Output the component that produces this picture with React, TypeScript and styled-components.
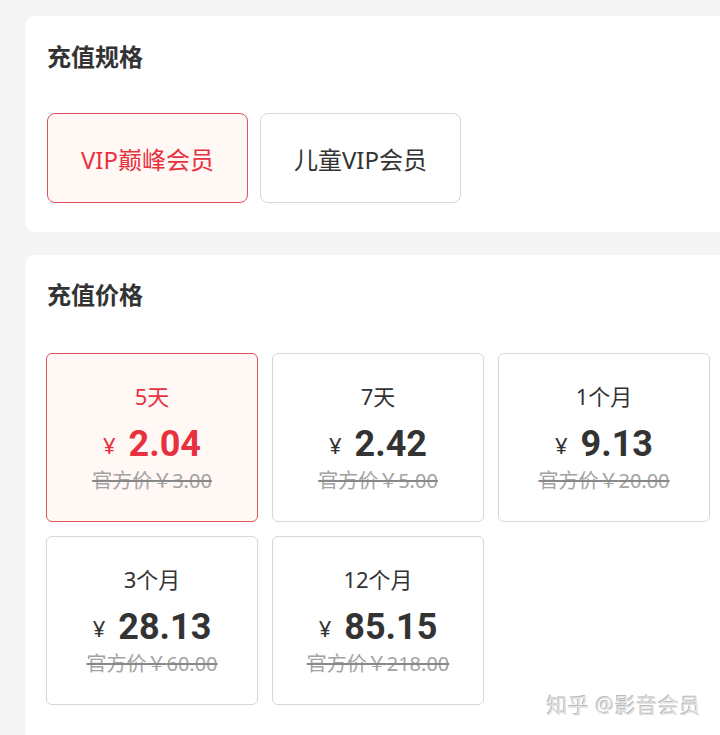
import React from "react";
import styled, { createGlobalStyle } from "styled-components";

const GlobalStyle = createGlobalStyle`
  body {
    margin: 0;
    background: #f4f4f4;
    font-family: "Noto Sans", "Noto Sans CJK SC", sans-serif;
  }
`;

const Page = styled.div`
  position: relative;
  width: 720px;
  height: 735px;
  overflow: hidden;
  padding-top: 16px;
  box-sizing: border-box;
`;

const Card = styled.section<{ $tall?: boolean }>`
  margin-left: 25px;
  width: 720px;
  background: #fff;
  border-radius: 10px;
  box-sizing: border-box;
  padding: 0 0 0 22px;
  min-height: ${p => (p.$tall ? "520px" : "auto")};
  & + & {
    margin-top: 23px;
  }
`;

const Title = styled.h2<{ $top: number; $bottom: number }>`
  margin: 0;
  padding: ${p => p.$top}px 0 ${p => p.$bottom}px 0;
  font-size: 24px;
  line-height: 32px;
  font-weight: 700;
  color: #333;
`;

const SpecRow = styled.div`
  display: flex;
  gap: 12px;
  padding-bottom: 29px;
`;

const SpecButton = styled.div<{ $active?: boolean }>`
  width: 201px;
  height: 90px;
  box-sizing: border-box;
  display: flex;
  align-items: center;
  justify-content: center;
  border-radius: 8px;
  border: 1.5px solid ${p => (p.$active ? "#e2525c" : "#d6d6d6")};
  background: ${p => (p.$active ? "#fff8f5" : "#fff")};
  color: ${p => (p.$active ? "#e8313f" : "#333")};
  font-size: 24px;
`;

const PriceGrid = styled.div`
  display: grid;
  grid-template-columns: repeat(3, 212px);
  gap: 14px;
  margin-left: -1px;
`;

const PriceCard = styled.div<{ $active?: boolean }>`
  height: 169px;
  box-sizing: border-box;
  display: flex;
  flex-direction: column;
  align-items: center;
  justify-content: center;
  border-radius: 6px;
  border: 1.5px solid ${p => (p.$active ? "#e2525c" : "#d6d6d6")};
  background: ${p => (p.$active ? "#fff8f5" : "#fff")};
  color: ${p => (p.$active ? "#e8313f" : "#333")};
`;

const Duration = styled.div`
  font-size: 22px;
  line-height: 30px;
`;

const Price = styled.div`
  display: flex;
  align-items: center;
  gap: 13px;
  margin-top: 12px;
  line-height: 40px;
`;

const Yen = styled.span`
  font-size: 22px;
  padding-top: 2px;
`;

const Amount = styled.span`
  font-family: Roboto, "Noto Sans", sans-serif;
  font-size: 36px;
  font-weight: 700;
`;

const Official = styled.div`
  margin-top: 2px;
  font-size: 20px;
  line-height: 28px;
  color: #a3a3a3;
  text-decoration: line-through;
  text-decoration-color: #888;
`;

const Watermark = styled.div`
  position: absolute;
  right: 19px;
  bottom: 16px;
  font-size: 21px;
  color: #e2e2e2;
  text-shadow: -1px -1px 0 #b8b8b8;
  letter-spacing: 0.5px;
`;

const specs = [
  { label: "VIP巅峰会员", active: true },
  { label: "儿童VIP会员" }
];

const prices = [
  { d: "5天", p: "2.04", o: "3.00", active: true },
  { d: "7天", p: "2.42", o: "5.00" },
  { d: "1个月", p: "9.13", o: "20.00" },
  { d: "3个月", p: "28.13", o: "60.00" },
  { d: "12个月", p: "85.15", o: "218.00" }
];

const App = () => (
  <>
    <GlobalStyle />
    <Page>
      <Card>
        <Title $top={25} $bottom={40}>充值规格</Title>
        <SpecRow>
          {specs.map(s => (
            <SpecButton key={s.label} $active={s.active}>
              {s.label}
            </SpecButton>
          ))}
        </SpecRow>
      </Card>
      <Card $tall>
        <Title $top={24} $bottom={42}>充值价格</Title>
        <PriceGrid>
          {prices.map(x => (
            <PriceCard key={x.d} $active={x.active}>
              <Duration>{x.d}</Duration>
              <Price>
                <Yen>¥</Yen>
                <Amount>{x.p}</Amount>
              </Price>
              <Official>官方价￥{x.o}</Official>
            </PriceCard>
          ))}
        </PriceGrid>
      </Card>
      <Watermark>知乎 @影音会员</Watermark>
    </Page>
  </>
);

export default App;
